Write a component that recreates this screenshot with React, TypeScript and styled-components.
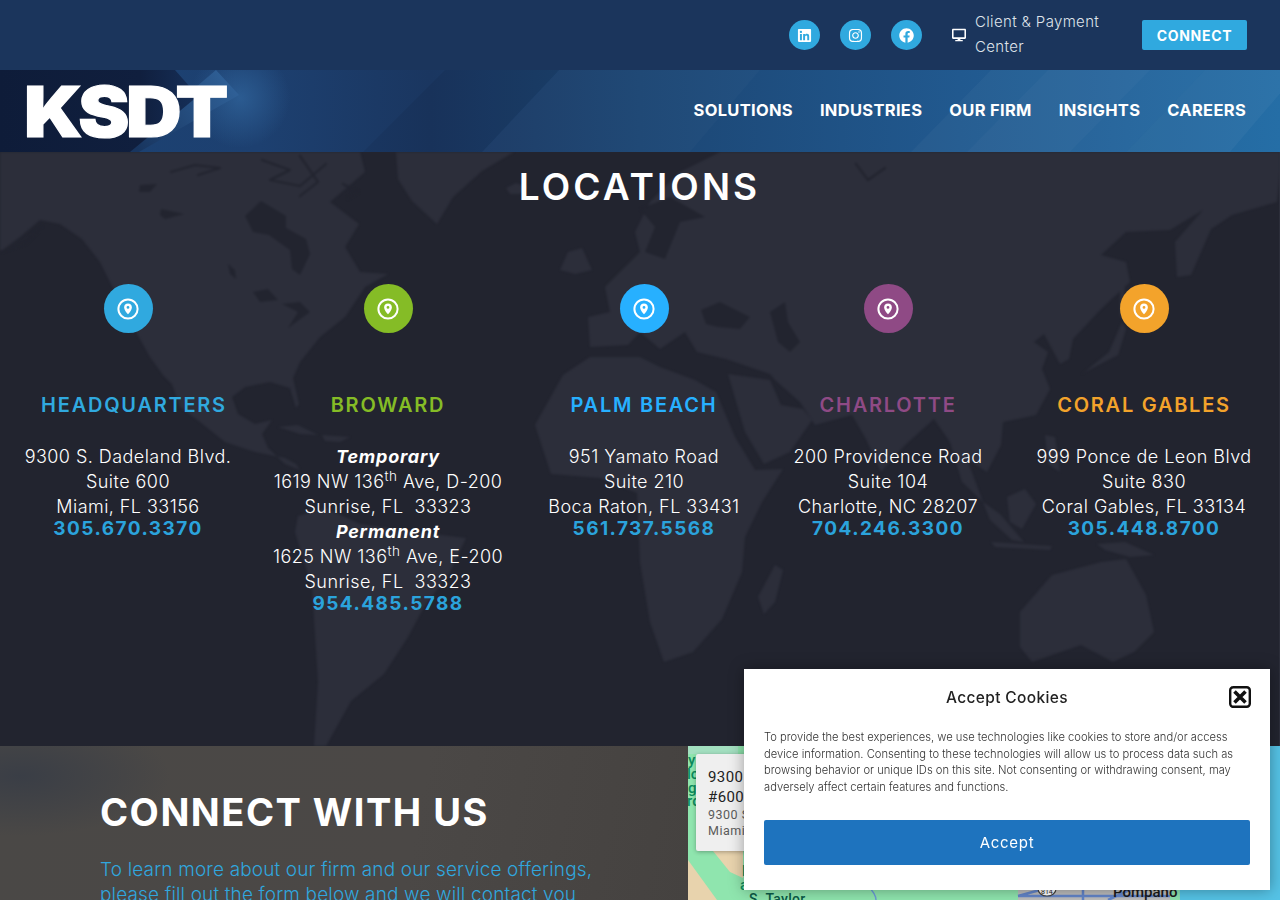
import React from "react";
import styled, { createGlobalStyle } from "styled-components";
import { FaLinkedin, FaInstagram, FaFacebook, FaDesktop } from "react-icons/fa";

const FONT = `"Inter", "Noto Sans", "Liberation Sans", sans-serif`;

const Global = createGlobalStyle`
  html, body { margin: 0; padding: 0; overflow: hidden; background: #22242f; }
  body { font-family: ${FONT}; }
  * { box-sizing: border-box; }
`;

const Page = styled.div`
  width: 1280px;
  height: 900px;
  overflow: hidden;
  display: flex;
  flex-direction: column;
`;

const TopBar = styled.div`
  height: 70px;
  flex: none;
  background: #1b355c;
  display: flex;
  align-items: center;
  justify-content: flex-end;
  padding-right: 33px;
`;

const Socials = styled.div`
  display: flex;
  gap: 20px;
  margin-right: 30px;
`;

const SocialDot = styled.a`
  width: 31px;
  height: 30px;
  border-radius: 50%;
  background: #30a9df;
  color: #fff;
  display: flex;
  align-items: center;
  justify-content: center;
  font-size: 15px;
`;

const ClientLink = styled.div`
  display: flex;
  align-items: center;
  gap: 9px;
  width: 190px;
  color: #fff;
  font-size: 14px;
`;

const ClientText = styled.span`
  width: 140px;
  margin-top: -2px;
  color: #dfe3ea;
  font-size: 15px;
  font-weight: 300;
  line-height: 25px;
  letter-spacing: 0.35px;
`;

const ConnectButton = styled.a`
  width: 105px;
  height: 30px;
  border-radius: 2px;
  background: #30a9df;
  color: #fff;
  font-size: 14px;
  font-weight: 700;
  letter-spacing: 0.7px;
  display: flex;
  align-items: center;
  justify-content: center;
`;

const NavBar = styled.header`
  position: relative;
  height: 82px;
  flex: none;
  display: flex;
  align-items: center;
  justify-content: space-between;
  padding: 0 34px 0 26px;
  background: linear-gradient(90deg, #1b4273 0, #1d4070 260px, #1a3660 430px, #1c4674 640px, #21598f 960px, #256ea6 1280px);
  overflow: hidden;
`;

const NavArt = styled.svg`
  position: absolute;
  inset: 0;
  width: 1280px;
  height: 82px;
`;

const Logo = styled.div`
  position: relative;
  margin: 2px 0 0 -2px;
  width: 202px;
  height: 52px;
  color: #fff;
  font-size: 70px;
  line-height: 52px;
  font-weight: 900;
  letter-spacing: -3.2px;
  -webkit-text-stroke: 1.2px #fff;
  white-space: nowrap;
  transform: scaleX(1.1);
  transform-origin: left center;
`;

const Nav = styled.nav`
  position: relative;
  display: flex;
  gap: 27px;
  margin-bottom: 2px;
`;

const NavItem = styled.a`
  color: #fff;
  font-size: 16.5px;
  font-weight: 700;
  letter-spacing: 0.3px;
  text-transform: uppercase;
  white-space: nowrap;
`;

const Locations = styled.section`
  position: relative;
  height: 594px;
  flex: none;
  background: #22242f;
  overflow: hidden;
  border-right: 1px solid #2c2e3a;
`;

const WorldMap = styled.svg`
  position: absolute;
  left: 0;
  top: 0;
  width: 1280px;
  height: 594px;
  filter: blur(1px);
`;

const Title = styled.h1`
  position: relative;
  margin: 0;
  height: 70px;
  line-height: 70px;
  text-align: center;
  color: #fff;
  font-size: 37px;
  font-weight: 600;
  letter-spacing: 3.1px;
`;

const Columns = styled.div`
  position: relative;
  margin-top: 62px;
  display: grid;
  grid-template-columns: 256px 264px 248px 240px 272px;
  text-align: center;
`;

const Column = styled.div`
  display: flex;
  flex-direction: column;
  align-items: center;
  color: #fff;
`;

const PinDot = styled.div<{ $c: string }>`
  width: 49px;
  height: 49px;
  border-radius: 50%;
  background: ${(p) => p.$c};
  display: flex;
  align-items: center;
  justify-content: center;
`;

const ColHeading = styled.h3<{ $c: string; $shift?: number }>`
  margin: 60px 0 27px;
  height: 24px;
  line-height: 24px;
  color: ${(p) => p.$c};
  font-size: 20px;
  font-weight: 600;
  letter-spacing: 1.75px;
  white-space: nowrap;
  padding-left: ${(p) => p.$shift ?? 0}px;
`;

const Line = styled.div`
  height: 25px;
  line-height: 25px;
  font-size: 18px;
  font-weight: 300;
  letter-spacing: 0.45px;
  white-space: pre;
  sup {
    font-size: 13.5px;
    line-height: 0;
    vertical-align: baseline;
    position: relative;
    top: -7px;
  }
`;

const LineBold = styled(Line)`
  font-weight: 700;
  font-style: italic;
  letter-spacing: 0.8px;
`;

const Phone = styled.a`
  height: 19px;
  line-height: 19px;
  color: #2ba3dc;
  font-size: 19px;
  font-weight: 700;
  letter-spacing: 1.45px;
`;

const Connect = styled.section`
  flex: 1;
  min-height: 0;
  display: grid;
  grid-template-columns: 688px 592px;
  overflow: hidden;
`;

const ConnectText = styled.div`
  padding: 43px 60px 0 100px;
  background:
    radial-gradient(150px 60px at 20px 30px, #3a3e46 0, rgba(58, 62, 70, 0) 100%),
    linear-gradient(100deg, #4a4846 0, #4b4846 60%, #454240 100%);
`;

const ConnectTitle = styled.h2`
  margin: 0 0 22px;
  height: 46px;
  line-height: 46px;
  color: #fff;
  font-size: 38px;
  font-weight: 700;
  letter-spacing: 1.5px;
  white-space: nowrap;
`;

const ConnectBody = styled.p`
  margin: 0;
  color: #30a6de;
  font-size: 19px;
  line-height: 25px;
  font-weight: 300;
  letter-spacing: 0.15px;
  white-space: nowrap;
`;

const MapPane = styled.div`
  position: relative;
  overflow: hidden;
  background: #8fe5ae;
`;

const MapArt = styled.svg`
  position: absolute;
  inset: 0;
  width: 592px;
  height: 154px;
  font-family: "Roboto", sans-serif;
`;

const MapCard = styled.div`
  position: absolute;
  left: 8px;
  top: 8px;
  width: 250px;
  height: 97px;
  padding: 13px 12px;
  background: #efefef;
  border-radius: 2px;
  box-shadow: 0 1px 4px rgba(0, 0, 0, 0.3);
  font-family: "Roboto", sans-serif;
  color: #222;
`;

const CardName = styled.div`
  font-size: 15px;
  font-weight: 400;
  letter-spacing: 0.4px;
  line-height: 20px;
`;

const CardAddress = styled.div`
  font-size: 12.5px;
  line-height: 16px;
  letter-spacing: 0.5px;
  color: #5b5b5b;
`;

const Cookie = styled.aside`
  position: fixed;
  right: 10px;
  bottom: 10px;
  width: 526px;
  height: 221px;
  background: #fff;
  box-shadow: 0 0 14px rgba(0, 0, 0, 0.35);
  padding: 0 20px;
`;

const CookieHead = styled.div`
  position: relative;
  height: 56px;
  display: flex;
  align-items: center;
  justify-content: center;
`;

const CookieTitle = styled.div`
  font-size: 15.5px;
  font-weight: 500;
  color: #222;
  letter-spacing: 0.35px;
`;

const CloseBtn = styled.svg`
  position: absolute;
  right: -1px;
  top: 17px;
  width: 22px;
  height: 22px;
`;

const CookieBody = styled.div`
  margin-top: 4px;
  font-size: 11.2px;
  line-height: 16.6px;
  font-weight: 300;
  color: #333;
  letter-spacing: 0;
  white-space: nowrap;
`;

const AcceptBtn = styled.button`
  display: block;
  width: 486px;
  height: 45px;
  margin-top: 25px;
  border: 0;
  border-radius: 2px;
  background: #1e73be;
  color: #fff;
  font-family: ${FONT};
  font-size: 15px;
  font-weight: 400;
  letter-spacing: 0.7px;
`;

const PinIcon = () => (
  <svg width="22" height="22" viewBox="0 0 22 22" fill="none">
    <circle cx="11" cy="11" r="9.6" stroke="#fff" strokeWidth="2" />
    <path
      d="M11 5.6c-2.3 0-3.9 1.7-3.9 3.8 0 2.4 2.5 5.2 3.9 6.9 1.4-1.7 3.9-4.5 3.9-6.9 0-2.1-1.6-3.8-3.9-3.8zm0 5.2a1.4 1.4 0 1 1 0-2.8 1.4 1.4 0 0 1 0 2.8z"
      fill="#fff"
    />
  </svg>
);

const locations = [
  {
    name: "HEADQUARTERS",
    color: "#30a9df",
    shift: 12,
    phone: "305.670.3370",
    lines: ["9300 S. Dadeland Blvd.", "Suite 600", "Miami, FL 33156"],
  },
  {
    name: "BROWARD",
    color: "#85bc26",
    phone: "954.485.5788",
    lines: ["*Temporary", "1619 NW 136^ Ave, D-200", "Sunrise, FL  33323", "*Permanent", "1625 NW 136^ Ave, E-200", "Sunrise, FL  33323"],
  },
  {
    name: "PALM BEACH",
    color: "#27b0ff",
    phone: "561.737.5568",
    lines: ["951 Yamato Road", "Suite 210", "Boca Raton, FL 33431"],
  },
  {
    name: "CHARLOTTE",
    color: "#8f4a85",
    phone: "704.246.3300",
    lines: ["200 Providence Road", "Suite 104", "Charlotte, NC 28207"],
  },
  {
    name: "CORAL GABLES",
    color: "#f3a32b",
    phone: "305.448.8700",
    lines: ["999 Ponce de Leon Blvd", "Suite 830", "Coral Gables, FL 33134"],
  },
];

const renderLine = (l: string, i: number) => {
  if (l.startsWith("*")) return <LineBold key={i}>{l.slice(1)}</LineBold>;
  if (l.includes("^")) {
    const [a, b] = l.split("^");
    return (
      <Line key={i}>
        {a}
        <sup>th</sup>
        {b}
      </Line>
    );
  }
  return <Line key={i}>{l}</Line>;
};

const LAND = "#2c2e3a";
const SEA = "#22242f";

const World = () => (
  <WorldMap viewBox="0 0 1280 594">
    <g fill={LAND}>
      <path d="M0,100 L20,85 L40,68 L60,72 L82,87 L100,110 L110,130 L135,178 L150,205 L163,223 L172,232 L180,255 L200,270 L225,290 L255,300 L270,303 L285,306 L296,312 L300,318 L285,312 L268,296 L262,282 L272,268 L255,272 L238,262 L232,245 L245,235 L270,230 L290,236 L296,256 L299,252 L293,226 L300,210 L320,185 L345,165 L365,135 L388,122 L360,120 L345,95 L359,72 L330,50 L365,20 L360,0 L0,0 Z" />
      <path d="M396,0 L514,0 L482,19 L453,45 L437,72 L412,49 L398,27 Z" />
      <path d="M506,36 L516,31 L527,35 L520,42 L510,42 Z" />
      <path d="M278,275 L298,273 L318,283 L300,282 Z M322,283 L350,285 L340,290 L325,289 Z" />
      <path d="M298,364 L326,356 L360,372 L408,379 L466,386 L450,420 L424,455 L408,485 L384,522 L351,549 L326,594 L314,594 L318,530 L312,435 L295,380 Z" />
      <path d="M560,118 L568,100 L582,96 L592,118 L575,122 Z" />
      <path d="M535,273 L563,223 L590,205 L640,205 L660,215 L695,228 L716,240 L735,285 L755,318 L783,317 L762,350 L745,385 L742,420 L722,467 L693,500 L664,510 L650,470 L640,410 L637,341 L600,326 L551,322 Z" />
      <path d="M758,445 L775,413 L783,418 L775,450 L764,462 Z" />
      <path d="M590,195 L588,165 L610,160 L605,135 L625,115 L640,100 L635,80 L650,50 L680,20 L720,0 L1280,0 L1280,20 L1277,50 L1232,63 L1211,77 L1191,123 L1177,125 L1175,90 L1203,58 L1170,78 L1126,80 L1101,103 L1126,110 L1130,130 L1101,157 L1073,187 L1069,207 L1060,212 L1044,182 L1034,190 L1048,200 L1042,217 L1050,237 L1036,263 L1003,270 L1001,293 L987,320 L967,307 L983,350 L962,330 L950,290 L934,267 L905,293 L881,320 L866,287 L852,263 L815,273 L800,250 L775,228 L770,222 L726,207 L697,200 L685,180 L660,197 L640,180 L628,193 Z" />
      <path d="M728,222 L770,228 L781,253 L803,257 L812,268 L790,300 L764,312 L745,280 Z" />
      <path d="M1081,223 L1109,200 L1122,170 L1126,177 L1118,203 L1085,220 Z" />
      <path d="M1120,113 L1125,113 L1124,167 L1120,165 Z" />
      <path d="M1007,345 L1025,337 L1036,352 L1022,377 L1010,370 Z" />
      <path d="M983,350 L1000,362 L1024,390 L1012,388 L990,368 Z" />
      <path d="M991,390 L1052,394 L1050,398 L995,395 Z" />
      <path d="M1097,392 L1125,390 L1154,403 L1130,405 L1105,398 Z" />
      <path d="M1045,283 L1055,285 L1060,320 L1048,312 Z" />
      <path d="M1020,460 L1052,423 L1101,410 L1126,407 L1146,443 L1154,480 L1134,500 L1113,510 L1081,493 L1032,510 L1020,495 Z" />
    </g>
    <g fill={SEA}>
      <path d="M245,64 L261,49 L286,64 L286,76 L306,87 L310,102 L300,123 L292,117 L290,98 L269,83 L253,80 Z" />
      <path d="M140,33 L157,32 L150,40 L139,40 Z M161,57 L184,62 L165,67 L160,63 Z M228,112 L235,118 L236,127 L230,122 Z" />
      <path d="M253,140 L268,137 L278,148 L260,150 Z M282,152 L300,150 L310,160 L288,176 L298,160 Z" />
      <path d="M640,57 L670,45 L705,65 L680,70 L665,107 L645,100 L655,75 Z" />
      <path d="M701,158 L720,150 L750,165 L740,177 L718,175 L706,172 Z" />
      <path d="M770,160 L785,150 L788,170 L800,190 L790,200 L778,190 Z" />
    </g>
    <g fill="none" stroke={SEA} strokeWidth="2.2" strokeLinejoin="round" strokeLinecap="round">
      <path d="M171,20 L195,13 L220,16 L198,23" />
      <path d="M262,8 L290,18 L270,28 L300,34 L326,12 M300,4 L318,30 L300,44" />
      <path d="M343,32 L358,40 L348,46" />
      <path d="M856,12 L868,28 L885,16" />
      <path d="M0,100 L25,92 L42,74" />
    </g>
  </WorldMap>
);

export default function App() {
  return (
    <Page>
      <Global />
      <TopBar>
        <Socials>
          <SocialDot><FaLinkedin /></SocialDot>
          <SocialDot><FaInstagram /></SocialDot>
          <SocialDot><FaFacebook /></SocialDot>
        </Socials>
        <ClientLink>
          <FaDesktop />
          <ClientText>Client &amp; Payment Center</ClientText>
        </ClientLink>
        <ConnectButton>CONNECT</ConnectButton>
      </TopBar>

      <NavBar>
        <NavArt viewBox="0 0 1280 82">
          <defs>
            <radialGradient id="glow" cx="240" cy="28" r="50" gradientUnits="userSpaceOnUse">
              <stop offset="0" stopColor="#2f6299" stopOpacity="0.8" />
              <stop offset="1" stopColor="#2f6299" stopOpacity="0" />
            </radialGradient>
            <linearGradient id="corner" x1="0" x2="200" y1="0" y2="0" gradientUnits="userSpaceOnUse">
              <stop offset="0" stopColor="#0e1c39" />
              <stop offset="0.7" stopColor="#101f3e" />
              <stop offset="1" stopColor="#16305a" />
            </linearGradient>
            <linearGradient id="wedge" x1="239" y1="25" x2="139" y2="82" gradientUnits="userSpaceOnUse">
              <stop offset="0" stopColor="#2f6097" />
              <stop offset="1" stopColor="#18355f" />
            </linearGradient>
          </defs>
          <rect x="100" width="300" height="82" fill="url(#glow)" />
          <polygon points="363,82 445,0 559,0 482,82" fill="#000" opacity="0.06" />
          <polygon points="482,82 559,0 760,0 690,82" fill="#fff" opacity="0.02" />
          <polygon points="911,82 991,0 1205,0 1126,82" fill="#fff" opacity="0.03" />
          <polygon points="967,82 1048,0 1150,0 1070,82" fill="#fff" opacity="0.025" />
          <polygon points="1126,82 1205,0 1300,0 1230,82" fill="#fff" opacity="0.04" />
          <polygon points="216,0 239,25 139,82 120,82" fill="url(#wedge)" />
          <polygon points="0,0 175,0 198,26 130,82 0,82" fill="url(#corner)" />
        </NavArt>
        <Logo>KSDT</Logo>
        <Nav>
          {["Solutions", "Industries", "Our Firm", "Insights", "Careers"].map((n) => (
            <NavItem key={n}>{n}</NavItem>
          ))}
        </Nav>
      </NavBar>

      <Locations>
        <World />
        <Title>LOCATIONS</Title>
        <Columns>
          {locations.map((l) => (
            <Column key={l.name}>
              <PinDot $c={l.color}><PinIcon /></PinDot>
              <ColHeading $c={l.color} $shift={l.shift}>{l.name}</ColHeading>
              {l.lines.map(renderLine)}
              <Phone>{l.phone}</Phone>
            </Column>
          ))}
        </Columns>
      </Locations>

      <Connect>
        <ConnectText>
          <ConnectTitle>CONNECT WITH US</ConnectTitle>
          <ConnectBody>
            To learn more about our firm and our service offerings,<br />
            please fill out the form below and we will contact you
          </ConnectBody>
        </ConnectText>
        <MapPane>
          <MapArt viewBox="0 0 592 154">
            <polygon points="490,0 592,0 592,154 492,154" fill="#55c3e6" />
            <polygon points="0,114 29,154 0,154" fill="#e8d3ad" />
            <polygon points="25,105 55,105 55,132 42,126" fill="#e8d3ad" />
            <polygon points="0,0 50,0 50,8 0,8" fill="#a3dfc0" />
            <rect x="330" y="140" width="152" height="14" fill="#bdbdbd" />
            <path d="M330,150 H482 M395,140 V154 M420,154 L450,140 M352,144 L330,150" stroke="#6385c9" strokeWidth="2.5" fill="none" />
            <path d="M180,140 C186,146 188,150 188,154" stroke="#6a9bd8" strokeWidth="1.5" fill="none" />
            <ellipse cx="359" cy="143" rx="9" ry="7" fill="#fff" stroke="#444" strokeWidth="1.2" />
            <text x="353" y="148" fontSize="7" fill="#222">814</text>
            <g fill="#0b8a5c" fontSize="15" fontWeight="500">
              <text x="0" y="19">y</text>
              <text x="-1" y="33">lo</text>
              <text x="0" y="47">g</text>
              <text x="-1" y="60">rc</text>
              <text x="54" y="130">l</text>
              <text x="52" y="144">a</text>
            </g>
            <text x="61" y="158" fontSize="14" fontWeight="500" fill="#0a5a46" letterSpacing="0.3">S. Taylor</text>
            <text x="425" y="151" fontSize="15" fontWeight="500" fill="#1a1a1a">Pompano</text>
          </MapArt>
          <MapCard>
            <CardName>9300 S Dadeland Blvd<br />#600</CardName>
            <CardAddress>9300 S Dadeland Blvd,<br />Miami, FL 33156</CardAddress>
          </MapCard>
        </MapPane>
      </Connect>

      <Cookie>
        <CookieHead>
          <CookieTitle>Accept Cookies</CookieTitle>
          <CloseBtn viewBox="0 0 22 22">
            <rect x="1.2" y="1.2" width="19.6" height="19.6" rx="3" fill="#fff" stroke="#111" strokeWidth="2.4" />
            <path d="M5.5 5.5 L16.5 16.5 M16.5 5.5 L5.5 16.5" stroke="#111" strokeWidth="3.6" />
          </CloseBtn>
        </CookieHead>
        <CookieBody>
          To provide the best experiences, we use technologies like cookies to store and/or access<br />
          device information. Consenting to these technologies will allow us to process data such as<br />
          browsing behavior or unique IDs on this site. Not consenting or withdrawing consent, may<br />
          adversely affect certain features and functions.
        </CookieBody>
        <AcceptBtn>Accept</AcceptBtn>
      </Cookie>
    </Page>
  );
}
